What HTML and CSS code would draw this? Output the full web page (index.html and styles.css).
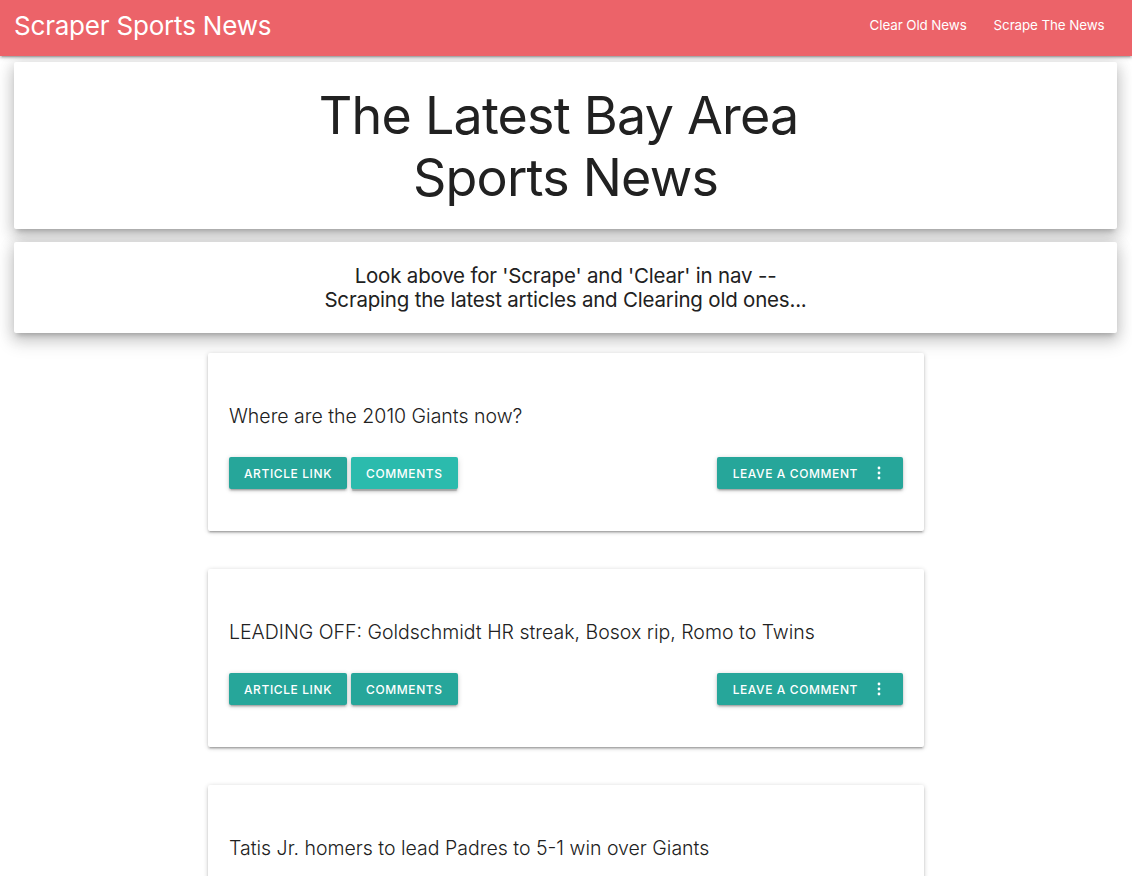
FILE: index.html
```html
<!DOCTYPE html>
<html lang="en">
<head>
<meta charset="utf-8">
<title>Scraper Sports News</title>
<link rel="stylesheet" href="styles.css">
</head>
<body>
<nav class="nav">
  <a class="brand" href="#">Scraper Sports News</a>
  <ul class="nav-links">
    <li><a href="#">Clear Old News</a></li>
    <li><a href="#">Scrape The News</a></li>
  </ul>
</nav>

<header class="hero">
  <div class="panel panel-title">
    <h1 class="title">The Latest Bay Area&nbsp;<br>Sports News</h1>
  </div>
  <div class="panel panel-note">
    <p class="note">Look above for 'Scrape' and 'Clear' in nav --<br>Scraping the latest articles and Clearing old ones...</p>
  </div>
</header>

<main class="articles">
  <article class="card">
    <h2 class="card-title">Where are the 2010 Giants now?</h2>
    <div class="card-actions">
      <div class="left-actions">
        <a class="btn" href="#">Article Link</a>
        <a class="btn btn-hover" href="#">Comments</a>
      </div>
      <a class="btn btn-comment" href="#">Leave a Comment
        <svg class="dots" viewBox="0 0 4 14" width="4" height="14"><circle cx="2" cy="2" r="1.4"/><circle cx="2" cy="7" r="1.4"/><circle cx="2" cy="12" r="1.4"/></svg>
      </a>
    </div>
  </article>

  <article class="card">
    <h2 class="card-title">LEADING OFF: Goldschmidt HR streak, Bosox rip, Romo to Twins</h2>
    <div class="card-actions">
      <div class="left-actions">
        <a class="btn" href="#">Article Link</a>
        <a class="btn" href="#">Comments</a>
      </div>
      <a class="btn btn-comment" href="#">Leave a Comment
        <svg class="dots" viewBox="0 0 4 14" width="4" height="14"><circle cx="2" cy="2" r="1.4"/><circle cx="2" cy="7" r="1.4"/><circle cx="2" cy="12" r="1.4"/></svg>
      </a>
    </div>
  </article>

  <article class="card">
    <h2 class="card-title">Tatis Jr. homers to lead Padres to 5-1 win over Giants</h2>
    <div class="card-actions">
      <div class="left-actions">
        <a class="btn" href="#">Article Link</a>
        <a class="btn" href="#">Comments</a>
      </div>
      <a class="btn btn-comment" href="#">Leave a Comment
        <svg class="dots" viewBox="0 0 4 14" width="4" height="14"><circle cx="2" cy="2" r="1.4"/><circle cx="2" cy="7" r="1.4"/><circle cx="2" cy="12" r="1.4"/></svg>
      </a>
    </div>
  </article>
</main>
</body>
</html>
```

FILE: styles.css
```css
* { box-sizing: border-box; }

html, body {
  margin: 0;
  padding: 0;
}

body {
  font-family: Inter, "Noto Sans", Roboto, sans-serif;
  color: #212121;
  background: #fff;
  overflow: hidden;
}

a { text-decoration: none; color: inherit; }

.nav {
  height: 56px;
  background: #ec6369;
  display: flex;
  align-items: flex-start;
  justify-content: space-between;
  padding: 0 14px 0 14px;
  box-shadow: 0 2px 2px 0 rgba(0,0,0,.14), 0 3px 1px -2px rgba(0,0,0,.12), 0 1px 5px 0 rgba(0,0,0,.2);
  position: relative;
  z-index: 2;
}

.brand {
  color: #fff;
  font-size: 26px;
  font-weight: 400;
  letter-spacing: -0.2px;
  line-height: 52px;
}

.nav-links {
  list-style: none;
  margin: 0;
  padding: 0;
  display: flex;
}

.nav-links a {
  display: block;
  color: #fff;
  font-size: 13.4px;
  padding: 0 13.5px;
  line-height: 50px;
  letter-spacing: -0.1px;
}

.hero {
  padding: 6px 15px 0 14px;
  display: flex;
  flex-direction: column;
  gap: 13px;
}

.panel {
  background: #fff;
  border-radius: 2px;
  box-shadow: 0 8px 17px 2px rgba(0,0,0,.14), 0 3px 14px 2px rgba(0,0,0,.12), 0 5px 5px -3px rgba(0,0,0,.2);
  text-align: center;
}

.panel-title {
  height: 167px;
  padding-top: 23px;
}

.title {
  margin: 0;
  font-size: 52px;
  font-weight: 400;
  line-height: 62px;
  letter-spacing: -0.8px;
}

.panel-note {
  height: 91px;
  padding-top: 22px;
}

.note {
  margin: 0;
  font-size: 20.5px;
  line-height: 24px;
  letter-spacing: -0.2px;
}

.articles {
  width: 716px;
  margin: 20px auto 0;
  display: flex;
  flex-direction: column;
  gap: 38px;
}

.card {
  background: #fff;
  border-radius: 2px;
  height: 178px;
  padding: 51px 21px 0 21px;
  box-shadow: 0 2px 2px 0 rgba(0,0,0,.14), 0 3px 1px -2px rgba(0,0,0,.12), 0 1px 5px 0 rgba(0,0,0,.2);
}

.card-title {
  margin: 0;
  font-size: 19.5px;
  font-weight: 300;
  line-height: 24px;
  letter-spacing: 0;
}

.card-actions {
  margin-top: 29px;
  display: flex;
  justify-content: space-between;
  align-items: center;
}

.left-actions {
  display: flex;
  gap: 4px;
}

.btn {
  display: inline-flex;
  align-items: center;
  height: 32px;
  padding: 0 15px;
  background: #26a69a;
  color: #fff;
  font-size: 12px;
  font-weight: 500;
  text-transform: uppercase;
  letter-spacing: 0.6px;
  border-radius: 2px;
  box-shadow: 0 2px 2px 0 rgba(0,0,0,.14), 0 3px 1px -2px rgba(0,0,0,.12), 0 1px 5px 0 rgba(0,0,0,.2);
}

.btn-hover {
  background: #2bbbad;
  box-shadow: 0 3px 3px 0 rgba(0,0,0,.14), 0 1px 7px 0 rgba(0,0,0,.12), 0 3px 1px -1px rgba(0,0,0,.2);
}

.btn-comment {
  padding-left: 16px;
  padding-right: 22px;
}

.dots {
  fill: #fff;
  margin-left: 19px;
}
```
